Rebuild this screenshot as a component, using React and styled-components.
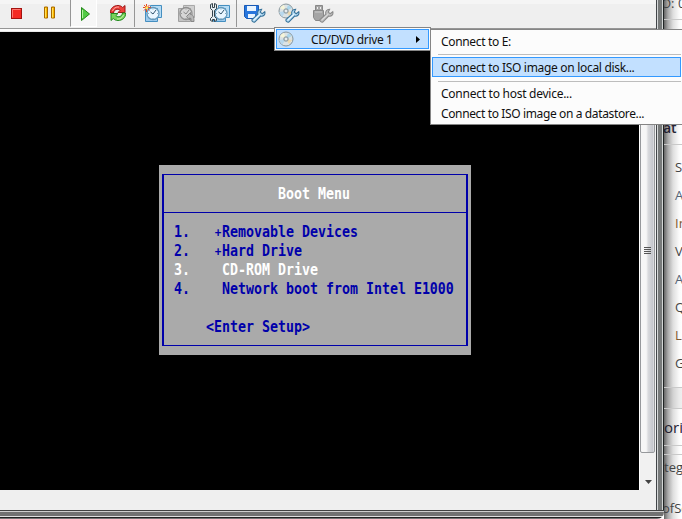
import React from "react";
import styled, { createGlobalStyle } from "styled-components";

const Global = createGlobalStyle`
  body { margin: 0; overflow: hidden; }
  * { box-sizing: border-box; }
`;

const Desktop = styled.div`
  position: relative;
  display: grid;
  grid-template-columns: 664px 18px;
  width: 682px;
  height: 519px;
  overflow: hidden;
  background: #fff;
`;

const Window = styled.main`
  display: grid;
  grid-template-columns: 656px 8px;
  grid-template-rows: 510px 9px;
  height: 519px;
`;

const Content = styled.section`
  display: flex;
  flex-direction: column;
  background: #efefef;
`;

const RightFrame = styled.div`
  background: linear-gradient(90deg, #414548 0 1px, #d6d8d9 1px 2px, #777a7a 2px 6px, #d3d6d6 6px 7px, #202424 7px);
`;

const BottomFrame = styled.div`
  grid-column: 1 / 3;
  border-bottom-right-radius: 7px;
  background: linear-gradient(180deg, #414141 0 1px, #cfcfcf 1px 2px, #717171 2px 6px, #e0e0e0 6px 7px, #202020 7px 8px, #747474 8px);
`;

const Toolbar = styled.header`
  display: flex;
  flex: 0 0 32px;
  height: 32px;
  background: linear-gradient(180deg, #f5f5f5 0 4px, #efefef 4px 28px, #969696 28px 29px, #fcfcfc 29px 31px, #e8e8e8 31px);
`;

const Tool = styled.div`
  width: ${({ $w }) => $w}px;
  height: 27px;
  padding-left: ${({ $pad }) => $pad || 0}px;
  padding-top: 3px;
  border-left: ${({ $sep }) => ($sep ? "1px solid #969696" : "0")};
  background: ${({ $active }) => ($active ? "#f7f7f7" : "transparent")};
  border-right: ${({ $active }) => ($active ? "1px solid #fff" : "0")};
  border-bottom: ${({ $active }) => ($active ? "1px solid #fff" : "0")};
`;

const Icon = styled.svg`
  display: block;
  flex: none;
  width: ${({ $w, $size }) => $w || $size || 20}px;
  height: ${({ $size }) => $size || 20}px;
`;

const Body = styled.div`
  display: flex;
  height: 458px;
`;

const Screen = styled.div`
  width: 639px;
  height: 458px;
  padding: 133px 0 0 159px;
  background: #000;
`;

const BootPanel = styled.div`
  width: 312px;
  height: 190px;
  padding: 9px 3px;
  background: #aaa;
`;

const BootFrame = styled.div`
  height: 172px;
  border: solid #0000aa;
  border-width: 1px 2px;
`;

const BootTitle = styled.div`
  height: 38px;
  padding: 9px 0 0 114px;
  border-bottom: 1px solid #0000aa;
`;

const BootList = styled.div`
  padding: 9px 0 0 10px;
`;

const BootText = styled.div`
  height: 19px;
  margin-left: ${({ $indent }) => $indent || 0}px;
  margin-top: ${({ $gap }) => $gap || 0}px;
  color: ${({ $light }) => ($light ? "#fff" : "#0000aa")};
  font: bold 13.29px/19px "DejaVu Sans Mono", monospace;
  white-space: pre;
  transform: scaleY(1.19);
`;

const Plus = styled.span`
  display: inline-block;
  width: 8px;
  font-size: 11px;
  text-align: center;
  line-height: 10px;
`;

const Scrollbar = styled.div`
  width: 17px;
  height: 458px;
  border-left: 1px solid #fff;
  background: #f1f1f1;
`;

const Thumb = styled.div`
  display: flex;
  justify-content: center;
  width: 15px;
  height: 421px;
  padding-top: 214px;
  border: 1px solid #96989b;
  border-radius: 2px;
  background: linear-gradient(90deg, #f6f6f6 0 40%, #d9dadd 55%, #c5c7cd 90%, #e5e5e7);
`;

const ArrowBox = styled.div`
  display: flex;
  justify-content: center;
  padding-top: 26px;
`;

const BackPage = styled.aside`
  height: 519px;
  overflow: hidden;
  background: linear-gradient(90deg, #666 0, #aaa 4px, #dedede 9px, #fafafa 15px, #fff);
  font-family: "Open Sans", sans-serif;
`;

const BackRow = styled.div`
  height: ${({ $h }) => $h}px;
  padding-top: ${({ $top }) => $top || 0}px;
  padding-left: ${({ $left }) => $left || 0}px;
  text-indent: ${({ $shift }) => $shift || 0}px;
  color: ${({ $color }) => $color || "#444"};
  font-size: ${({ $size }) => $size || 13}px;
  font-weight: ${({ $strong }) => ($strong ? 600 : 400)};
  line-height: ${({ $line }) => $line || 20}px;
  white-space: nowrap;
  border-bottom: ${({ $rule }) => ($rule ? "1px solid #c9c9c9" : "0")};
  background: ${({ $shade }) => ($shade ? "rgba(120,120,120,.12)" : "transparent")};
`;

const Menu = styled.nav`
  position: absolute;
  left: ${({ $x }) => $x}px;
  top: ${({ $y }) => $y}px;
  width: ${({ $w }) => $w}px;
  height: ${({ $h }) => $h}px;
  padding: 1px;
  border: 1px solid #858585;
  background: #fcfcfc;
  color: #101010;
  font: 12px/16px "Noto Sans", "Open Sans", sans-serif;
`;

const MenuItem = styled.div`
  display: flex;
  align-items: center;
  height: ${({ $h }) => $h || 20}px;
  padding-left: ${({ $pad }) => $pad}px;
  border: 1px solid ${({ $selected }) => ($selected ? "#3399ff" : "transparent")};
  background: ${({ $selected }) => ($selected ? "#c2e0ff" : "transparent")};
  white-space: nowrap;
`;

const Label = styled.span`
  padding-top: ${({ $drop }) => $drop || 0}px;
  letter-spacing: ${({ $track }) => $track || -0.38}px;
`;

const DriveLabel = styled(Label)`
  width: 122px;
  padding-left: 17px;
`;

const Separator = styled.div`
  height: ${({ $h }) => $h}px;
  padding-top: ${({ $h }) => $h - 3}px;
  margin-left: 6px;

  &::before {
    content: "";
    display: block;
    height: 1px;
    background: #bdbdbd;
  }
`;

const Stop = () => (
  <Icon viewBox="0 0 20 20">
    <rect x="2.5" y="5.5" width="10" height="10" fill="#f52a23" stroke="#a31310" />
    <path d="M3.5 14.5v-8h8" fill="none" stroke="#ff7770" />
  </Icon>
);

const Pause = () => (
  <Icon viewBox="0 0 20 20">
    <path d="M2.5 4.5h3v11h-3zM9.5 4.5h3v11h-3z" transform="translate(0 -.5)" fill="#ffb900" stroke="#a86a00" />
    <path d="M3.5 5v9.5M10.5 5v9.5" stroke="#ffe05a" />
  </Icon>
);

const Play = () => (
  <Icon viewBox="0 0 20 20">
    <path d="M3.5 4.5v13L11.5 11z" fill="#52cb45" stroke="#25881b" />
    <path d="M4.5 7v8" stroke="#b4f2a2" />
  </Icon>
);

const Reset = () => (
  <Icon viewBox="0 0 20 20">
    <path d="M1.5 10C1 5 5 2.5 9 2.5c2 0 3.5.7 4.7 2L16 2.5v7H9l2.2-2.2C8.5 5 5 6.5 4.5 10z" fill="#ed413b" stroke="#9d1717" />
    <path d="M3.5 8C4.5 5 7 3.7 10 4" fill="none" stroke="#ffaaa2" />
    <path d="M16.5 10c.5 5-3.5 7.5-7.5 7.5-2 0-3.5-.7-4.7-2L2 17.5v-7h7l-2.2 2.2c2.7 2.3 6.2.8 6.7-2.7z" fill="#79d35b" stroke="#238b20" />
    <path d="M14.5 12c-1 3-3.5 4.3-6.5 4" fill="none" stroke="#c1f1a4" />
  </Icon>
);

const Clock = ({ gray }) => (
  <>
    <path d="M7.5 1.5h11v12h-11z" fill={gray ? "#d0d0d0" : "#b6dcf5"} stroke={gray ? "#a9a9a9" : "#458fc0"} />
    <path d="M2.5 4.5h12v13h-12z" fill={gray ? "#c4c4c4" : "#9dcaed"} stroke={gray ? "#a0a0a0" : "#458fc0"} />
    <circle cx="10" cy="9.5" r="6" fill={gray ? "#d5d5d5" : "#e9f6ff"} stroke={gray ? "#919191" : "#6499bb"} strokeWidth="1.3" />
    <path d="M10 10l3-4M10 10L7.5 8" fill="none" stroke={gray ? "#888" : "#31546d"} />
    <path d="M10 4.5v1M14 9.5h1M10 14v1M5 9.5h1" stroke={gray ? "#999" : "#83aac3"} />
  </>
);

const Snapshot = () => (
  <Icon viewBox="0 -1 20 20">
    <Clock />
    <path d="M3.5 0v8M0 3.5h8M1 1l5.5 5.5M6.5 1L1 6.5" stroke="#e84b24" />
    <circle cx="3.7" cy="3.7" r="1.5" fill="#ffe45b" />
  </Icon>
);

const Revert = () => (
  <Icon viewBox="0 -1 20 20">
    <Clock gray />
    <path d="M10.5 12.5l4-4v2c2.5 0 3.5 2 3.5 7h-3v-3l-1.5-.5v2z" fill="#b8b8b8" stroke="#888" />
  </Icon>
);

const Manage = () => (
  <Icon viewBox="0 0 20 20">
    <g transform="translate(1 1)"><Clock /></g>
    <path d="M.5 1.5v4l2 2v6l-2 2v2l2 1v-2h2v2l2-1v-2l-2-2v-6l2-2v-4l-2-1v4h-2v-4z" fill="#e4edf2" stroke="#34434b" />
  </Icon>
);

const Wrench = ({ gray }) => (
  <>
    <path d="M8.2 16.4l5.7-5.2c-.8-2.5.8-5 3.7-5l-1.4 3 2 1.6 2.6-2c.8 2.8-1.6 5-4.1 4.2L11 18.8c-1.2 1.1-3.9-.8-2.8-2.4z" fill={gray ? "#c4c4c4" : "#bfe2f8"} stroke={gray ? "#8b8b8b" : "#37739b"} strokeWidth="1.1" />
    <path d="M10 16.8l6-5.5" stroke={gray ? "#ddd" : "#f0faff"} />
  </>
);

const Floppy = () => (
  <Icon $w={22} viewBox="0 0 22 20">
    <path d="M.5 2.5h14v13h-12l-2-2z" fill="#2876dc" stroke="#1859b5" />
    <path d="M3 3h9v5H3zM4 11h7v4H4z" fill="#e8f4ff" />
    <Wrench />
  </Icon>
);

const DiscArt = () => (
  <>
    <circle cx="8" cy="8" r="7" fill="#dce3e5" stroke="#88959b" />
    <path d="M8 8L2 5a7 7 0 014-3z" fill="#f6f5d8" />
    <path d="M8 8L4 14l-3-5z" fill="#b8d8ed" />
    <path d="M8 8l2-6 4 3z" fill="#aad6ec" />
    <path d="M8 8l6 1-3 4z" fill="#ecd9b0" />
    <circle cx="8" cy="8" r="2.3" fill="#b8c5ca" stroke="#7e8c92" strokeWidth=".7" />
    <circle cx="8" cy="8" r=".9" fill="#fff" />
  </>
);

const DiscTool = () => (
  <Icon $w={22} viewBox="0 0 22 20">
    <DiscArt />
    <Wrench />
  </Icon>
);

const Usb = () => (
  <Icon $w={22} viewBox="0 0 22 20">
    <path d="M3.5 2.5h7v5h-7zM1.5 7.5h10v7l-2 3h-6l-2-3z" fill="#a5a5a5" stroke="#888" />
    <path d="M5 4h1v2H5zM8 4h1v2H8z" fill="#eee" />
    <path d="M3 9h7" stroke="#ccc" />
    <Wrench gray />
  </Icon>
);

export default function App() {
  return (
    <>
      <Global />
      <Desktop>
        <Window>
          <Content>
            <Toolbar>
              <Tool $w={34} $pad={9}><Stop /></Tool>
              <Tool $w={36} $pad={8}><Pause /></Tool>
              <Tool $w={27} $pad={7} $sep $active><Play /></Tool>
              <Tool $w={37} $pad={12}><Reset /></Tool>
              <Tool $w={35} $pad={8} $sep><Snapshot /></Tool>
              <Tool $w={33} $pad={7}><Revert /></Tool>
              <Tool $w={34} $pad={8}><Manage /></Tool>
              <Tool $w={34} $pad={7} $sep><Floppy /></Tool>
              <Tool $w={34} $pad={8}><DiscTool /></Tool>
              <Tool $w={34} $pad={8}><Usb /></Tool>
            </Toolbar>
            <Body>
              <Screen>
                <BootPanel>
                  <BootFrame>
                    <BootTitle><BootText $light>Boot Menu</BootText></BootTitle>
                    <BootList>
                      <BootText>{"1.   "}<Plus>+</Plus>Removable Devices</BootText>
                      <BootText>{"2.   "}<Plus>+</Plus>Hard Drive</BootText>
                      <BootText $light>{"3.    CD-ROM Drive"}</BootText>
                      <BootText>{"4.    Network boot from Intel E1000"}</BootText>
                      <BootText $indent={32} $gap={19}>{"<Enter Setup>"}</BootText>
                    </BootList>
                  </BootFrame>
                </BootPanel>
              </Screen>
              <Scrollbar>
                <Thumb>
                  <Icon $size={8} viewBox="0 0 8 8"><path d="M0 .5h7M0 2.5h7M0 4.5h7M0 6.5h7" stroke="#555" /></Icon>
                </Thumb>
                <ArrowBox>
                  <Icon $size={7} viewBox="0 0 7 7"><path d="M0 1h7L3.5 5z" fill="#444" /></Icon>
                </ArrowBox>
              </Scrollbar>
            </Body>
          </Content>
          <RightFrame />
          <BottomFrame />
        </Window>
        <BackPage>
          <BackRow $h={20} $shift={-3} $line={6} $rule>O: 0</BackRow>
          <BackRow $h={125} $top={98} $size={14} $shift={-1} $color="#252332" $strong $rule>at</BackRow>
          <BackRow $h={28} $top={12} $left={11}>S</BackRow>
          <BackRow $h={28} $top={12} $left={11} $color="#536274">A</BackRow>
          <BackRow $h={28} $top={12} $left={11} $color="#80592f">In</BackRow>
          <BackRow $h={28} $top={12} $left={11}>V</BackRow>
          <BackRow $h={28} $top={12} $left={11} $color="#536274">A</BackRow>
          <BackRow $h={28} $top={12} $left={11}>Q</BackRow>
          <BackRow $h={28} $top={12} $left={11} $color="#80592f">L</BackRow>
          <BackRow $h={47} $top={12} $left={11} $rule>G</BackRow>
          <BackRow $h={21} $shade $rule />
          <BackRow $h={37} $top={8} $size={15} $color="#252332" $rule>ori</BackRow>
          <BackRow $h={9} $rule />
          <BackRow $h={35} $top={2}>teg</BackRow>
          <BackRow $h={30} $top={8} $shift={-2}>ofSe</BackRow>
        </BackPage>
        <Menu $x={274} $y={27} $w={157} $h={24}>
          <MenuItem $h={20} $pad={1} $selected>
            <Icon $size={16} viewBox="0 0 16 16"><DiscArt /></Icon>
            <DriveLabel $drop={2}>CD/DVD drive 1</DriveLabel>
            <Icon $size={7} viewBox="0 0 7 7"><path d="M0 0v7l4-3.5z" fill="#000" /></Icon>
          </MenuItem>
        </Menu>
        <Menu $x={430} $y={29} $w={253} $h={96}>
          <MenuItem $h={21} $pad={8}><Label $drop={1} $track={-0.34}>Connect to E:</Label></MenuItem>
          <Separator $h={5} />
          <MenuItem $h={20} $pad={8} $selected><Label $drop={2} $track={-0.31}>Connect to ISO image on local disk...</Label></MenuItem>
          <Separator $h={7} />
          <MenuItem $h={20} $pad={8}><Label $track={-0.26}>Connect to host device...</Label></MenuItem>
          <MenuItem $h={20} $pad={8}><Label $track={-0.37}>Connect to ISO image on a datastore...</Label></MenuItem>
        </Menu>
      </Desktop>
    </>
  );
}
